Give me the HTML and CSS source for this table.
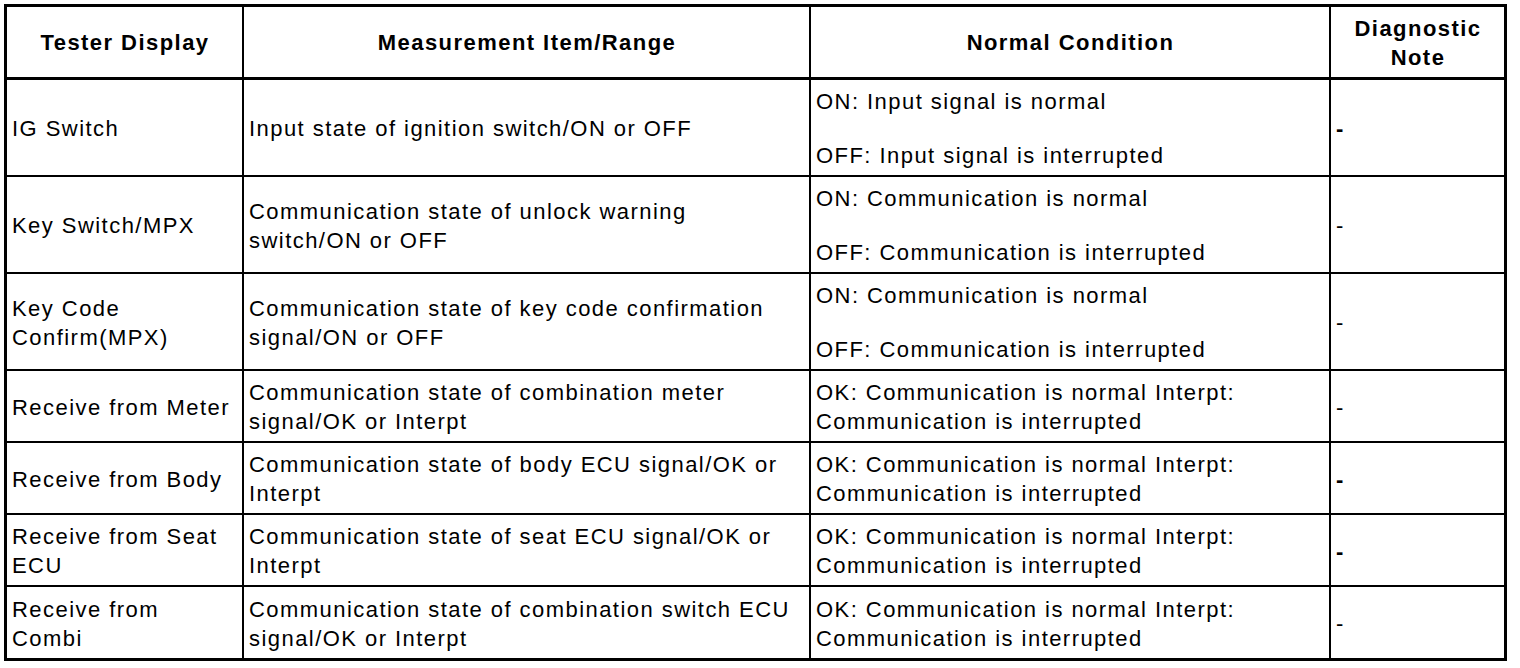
FILE: index.html
```html
<!DOCTYPE html>
<html lang="en">
<head>
<meta charset="utf-8">
<title>Tester Display</title>
<link rel="stylesheet" href="styles.css">
</head>
<body>
<table class="spec">
  <colgroup>
    <col class="c-display">
    <col class="c-item">
    <col class="c-cond">
    <col class="c-note">
  </colgroup>
  <thead>
    <tr>
      <th>Tester Display</th>
      <th>Measurement Item/Range</th>
      <th>Normal Condition</th>
      <th>Diagnostic<br>Note</th>
    </tr>
  </thead>
  <tbody>
    <tr class="tall">
      <td>IG Switch</td>
      <td>Input state of ignition switch/ON or OFF</td>
      <td><p class="cond">ON: Input signal is normal</p><p class="cond">OFF: Input signal is interrupted</p></td>
      <td><span class="dash bold">-</span></td>
    </tr>
    <tr class="tall">
      <td>Key Switch/MPX</td>
      <td>Communication state of unlock warning<br>switch/ON or OFF</td>
      <td><p class="cond">ON: Communication is normal</p><p class="cond">OFF: Communication is interrupted</p></td>
      <td><span class="dash">-</span></td>
    </tr>
    <tr class="tall">
      <td>Key Code<br>Confirm(MPX)</td>
      <td>Communication state of key code confirmation<br>signal/ON or OFF</td>
      <td><p class="cond">ON: Communication is normal</p><p class="cond">OFF: Communication is interrupted</p></td>
      <td><span class="dash">-</span></td>
    </tr>
    <tr class="short">
      <td>Receive from Meter</td>
      <td>Communication state of combination meter<br>signal/OK or Interpt</td>
      <td>OK: Communication is normal Interpt:<br>Communication is interrupted</td>
      <td><span class="dash">-</span></td>
    </tr>
    <tr class="short">
      <td>Receive from Body</td>
      <td>Communication state of body ECU signal/OK or<br>Interpt</td>
      <td>OK: Communication is normal Interpt:<br>Communication is interrupted</td>
      <td><span class="dash bold">-</span></td>
    </tr>
    <tr class="short">
      <td>Receive from Seat<br>ECU</td>
      <td>Communication state of seat ECU signal/OK or<br>Interpt</td>
      <td>OK: Communication is normal Interpt:<br>Communication is interrupted</td>
      <td><span class="dash bold">-</span></td>
    </tr>
    <tr class="short last">
      <td>Receive from<br>Combi</td>
      <td>Communication state of combination switch ECU<br>signal/OK or Interpt</td>
      <td>OK: Communication is normal Interpt:<br>Communication is interrupted</td>
      <td><span class="dash">-</span></td>
    </tr>
  </tbody>
</table>
</body>
</html>
```

FILE: styles.css
```css
html, body {
  margin: 0;
  padding: 0;
  background: #fff;
}

body {
  padding: 4px 0 0 4px;
  font-family: "Liberation Sans", Arial, sans-serif;
  color: #000;
}

.spec {
  border-collapse: separate;
  border-spacing: 0;
  table-layout: fixed;
  width: 1503px;
  border: 3px solid #000;
  font-size: 22px;
  letter-spacing: 1.45px;
  line-height: 29px;
}

.c-display { width: 237px; }
.c-item { width: 567px; }
.c-cond { width: 520px; }
.c-note { width: 173px; }

.spec th,
.spec td {
  box-sizing: border-box;
  border-right: 2px solid #000;
  border-bottom: 2px solid #000;
  padding: 0 4px 0 5px;
  vertical-align: middle;
  text-align: left;
  white-space: nowrap;
  font-weight: normal;
}

.spec th:last-child,
.spec td:last-child {
  border-right: none;
}

.spec th {
  height: 73px;
  border-bottom-width: 3px;
  font-weight: bold;
  text-align: center;
  line-height: 29px;
  padding-top: 1px;
}

.spec tr.tall td {
  height: 97px;
  padding-top: 2px;
}

.spec tr.short td {
  height: 72px;
  padding-top: 2px;
}

.spec tr.last td {
  border-bottom: none;
  height: 71px;
}

.cond {
  margin: 0;
}

.cond + .cond {
  margin-top: 25px;
}

.dash.bold {
  font-weight: bold;
}
```
